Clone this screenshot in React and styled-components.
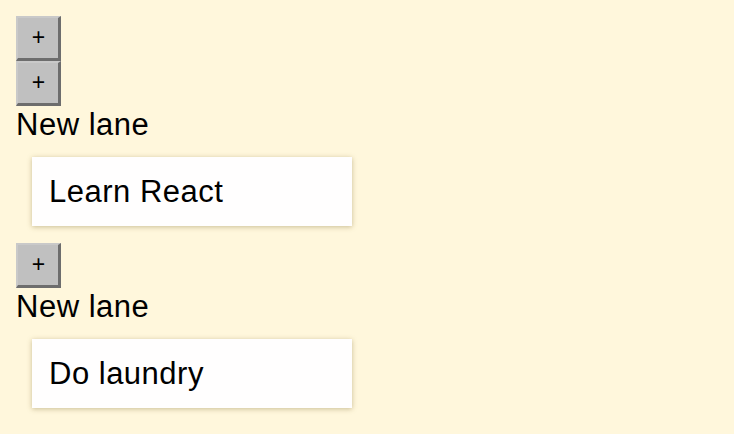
import React from "react";
import styled, { createGlobalStyle } from "styled-components";

const GlobalStyle = createGlobalStyle`
  html, body {
    margin: 0;
    background: #fff7dc;
    font-family: "Liberation Sans", Arial, sans-serif;
  }
`;

const AppContainer = styled.div`
  padding: 16px;
`;

const AddButton = styled.button`
  display: flex;
  align-items: center;
  justify-content: center;
  width: 45px;
  height: 45px;
  margin: 0;
  padding: 0 0 1px 1px;
  background: #c0c0c0;
  border-style: solid;
  border-width: 2px 3px 3px 2px;
  border-color: #c9c9c9 #6d6d6d #6d6d6d #c9c9c9;
  font-family: "Liberation Sans", Arial, sans-serif;
  font-size: 23px;
  line-height: 1;
  color: #000;
  cursor: pointer;
`;

const LaneName = styled.div`
  font-size: 31px;
  line-height: 37px;
  letter-spacing: 0.5px;
  color: #000;
`;

const NoteList = styled.ul`
  list-style: none;
  margin: 0;
  padding: 14px 0 17px 16px;
`;

const Note = styled.li`
  width: 320px;
  box-sizing: border-box;
  padding: 17px;
  background: #fffefe;
  box-shadow: 0 1px 5px rgba(120, 100, 40, 0.4);
  font-size: 31px;
  line-height: 35px;
  letter-spacing: 0.5px;
  color: #000;
`;

const lanes = [
  { id: 1, name: "New lane", notes: [{ id: 1, task: "Learn React" }] },
  { id: 2, name: "New lane", notes: [{ id: 2, task: "Do laundry" }] },
];

const Lane = ({ lane }) => (
  <div>
    <AddButton>+</AddButton>
    <LaneName>{lane.name}</LaneName>
    <NoteList>
      {lane.notes.map((note) => (
        <Note key={note.id}>{note.task}</Note>
      ))}
    </NoteList>
  </div>
);

const App = () => {
  return (
    <AppContainer>
      <GlobalStyle />
      <AddButton>+</AddButton>
      {lanes.map((lane) => (
        <Lane key={lane.id} lane={lane} />
      ))}
    </AppContainer>
  );
};

export default App;
